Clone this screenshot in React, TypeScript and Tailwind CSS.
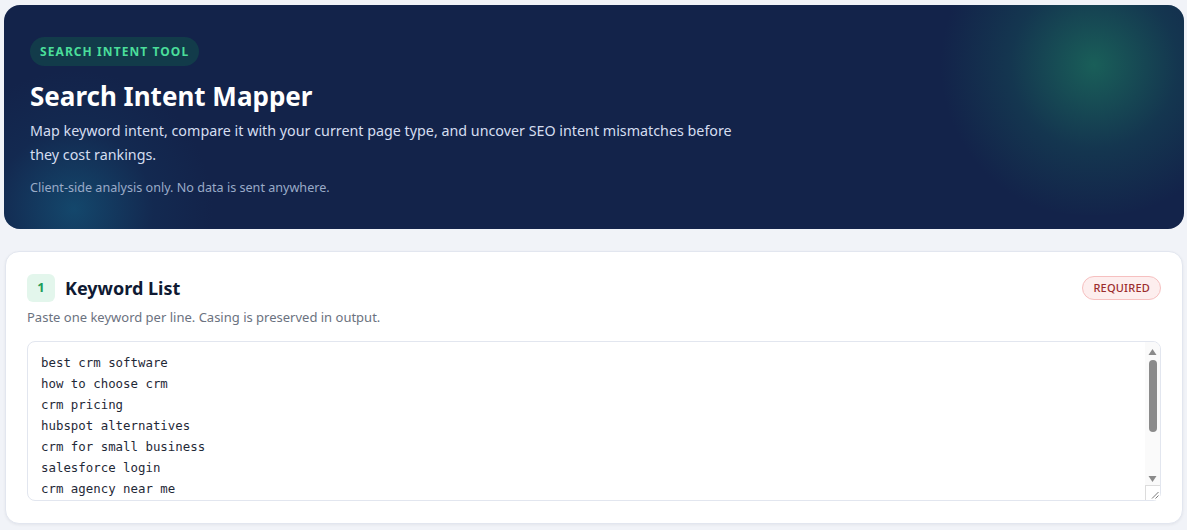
const keywords = [
  "best crm software",
  "how to choose crm",
  "crm pricing",
  "hubspot alternatives",
  "crm for small business",
  "salesforce login",
  "crm agency near me",
  "what is a crm",
  "crm demo",
];

// Classic textarea scrollbar with arrow buttons and resize grip
function ScrollRail() {
  return (
    <div className="pointer-events-none absolute right-[1px] top-[1px] bottom-[1px] flex w-[15px] flex-col items-center rounded-tr-[7px] bg-[#fafafa]">
      <svg width="9" height="8" viewBox="0 0 9 8" className="mt-[6px] shrink-0">
        <path d="M4.5 1 L8.5 7 L0.5 7 Z" fill="#8a8a8a" />
      </svg>
      <div className="mt-[4px] h-[72px] w-[8px] shrink-0 rounded-full bg-[#8b8b8b]" />
      <div className="flex-1" />
      <svg width="9" height="8" viewBox="0 0 9 8" className="mb-[2px] shrink-0">
        <path d="M0.5 1 L8.5 1 L4.5 7 Z" fill="#8a8a8a" />
      </svg>
      <div className="h-[15px] w-[15px] shrink-0 border-t border-l border-[#dcdcdc] bg-white">
        <svg width="14" height="14" viewBox="0 0 14 14">
          <path d="M12.5 6 L6 12.5 M12.5 9.5 L9.5 12.5" stroke="#7a7a7a" strokeWidth="1" />
        </svg>
      </div>
    </div>
  );
}

export default function App() {
  return (
    <div className="min-h-screen bg-[#f1f3f8] pl-[4px] pr-[3px] pt-[5px] pb-6 font-['Noto_Sans',sans-serif]">
      {/* Hero */}
      <header className="relative overflow-hidden rounded-[16px] bg-[#13234a] px-[26px] pt-[32px] pb-[32px] text-white">
        <div className="pointer-events-none absolute -right-[70px] -top-[90px] h-[300px] w-[320px] rounded-full bg-[radial-gradient(circle,rgba(28,120,95,0.7)_0%,rgba(22,90,90,0.35)_38%,rgba(19,35,74,0)_70%)]" />
        <div className="pointer-events-none absolute -bottom-[120px] -left-[70px] h-[280px] w-[280px] rounded-full bg-[radial-gradient(circle,rgba(20,95,130,0.6)_0%,rgba(19,60,100,0.25)_40%,rgba(19,35,74,0)_70%)]" />
        <div className="relative">
          <span className="inline-flex h-[29px] items-center rounded-full bg-[#123b4a] px-[10px] text-[12px] font-bold tracking-[0.09em] text-[#4ade9a]">
            SEARCH INTENT TOOL
          </span>
          <h1 className="mt-[12px] text-[26px] leading-[36px] font-bold">Search Intent Mapper</h1>
          <p className="mt-[5px] max-w-[720px] text-[14.3px] leading-[24px] text-[#d5def0]">
            Map keyword intent, compare it with your current page type, and uncover SEO intent mismatches before they cost rankings.
          </p>
          <p className="mt-[12px] text-[12.6px] leading-[18px] text-[#9aabc8]">
            Client-side analysis only. No data is sent anywhere.
          </p>
        </div>
      </header>

      {/* Keyword input card */}
      <section className="mt-[22px] ml-[1px] mr-[1px] rounded-[14px] border border-[#e2e6ef] bg-white px-[21px] pt-[22px] pb-[22px] shadow-[0_1px_3px_rgba(15,23,42,0.06)]">
        <div className="flex items-center justify-between">
          <div className="flex items-center gap-[10px]">
            <span className="flex h-[28px] w-[28px] items-center justify-center rounded-[6px] bg-[#e3f6ec] text-[13px] font-bold text-[#1f9d5a]">
              1
            </span>
            <h2 className="text-[18px] font-bold text-[#0f1a33]">Keyword List</h2>
          </div>
          <span className="rounded-full border border-[#f6c0c0] bg-[#fdeeee] px-[10px] py-[3px] text-[11px] font-medium tracking-[0.02em] text-[#9b2c2c]">
            REQUIRED
          </span>
        </div>
        <p className="mt-[6px] text-[13px] text-[#6b7280]">Paste one keyword per line. Casing is preserved in output.</p>
        <div className="relative mt-[13px]">
          <textarea
            readOnly
            defaultValue={keywords.join("\n")}
            className="block h-[160px] w-full resize-none overflow-hidden rounded-[8px] border border-[#e2e6ef] bg-white pl-[13px] pr-[20px] pt-[10px] font-['DejaVu_Sans_Mono',monospace] text-[12.4px] leading-[21px] text-[#1f2937] outline-none"
          />
          <ScrollRail />
        </div>
      </section>
    </div>
  );
}
